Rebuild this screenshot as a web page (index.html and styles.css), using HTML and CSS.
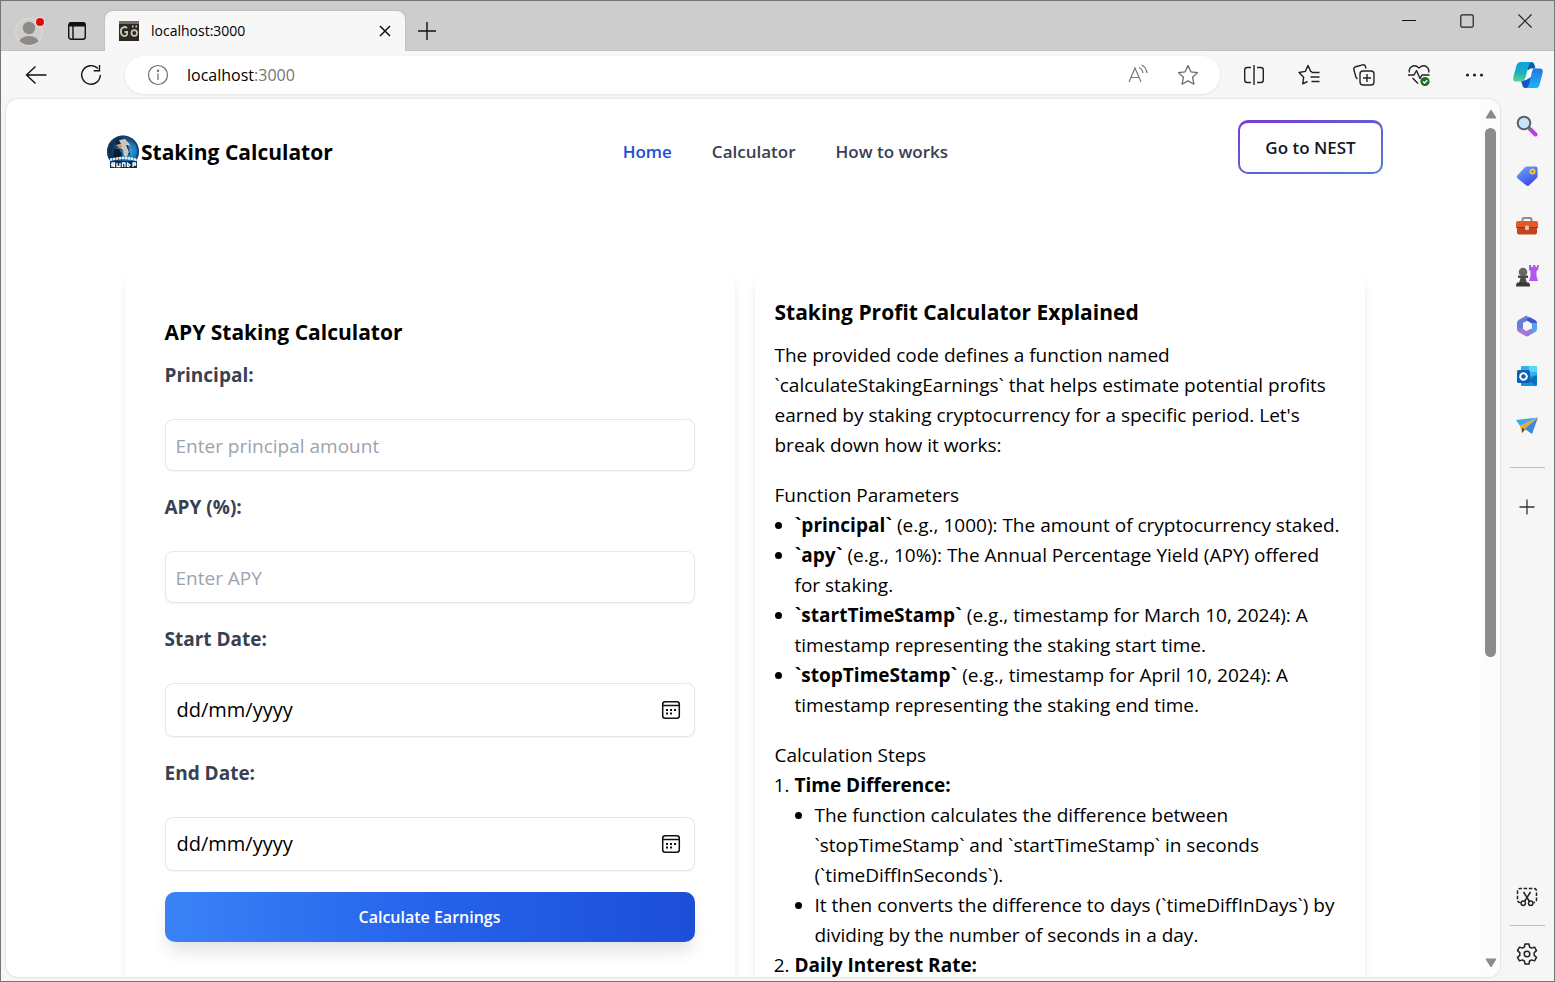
FILE: index.html
```html
<!DOCTYPE html>
<html lang="en">
<head>
<meta charset="utf-8">
<title>localhost:3000</title>
<link rel="stylesheet" href="styles.css">
</head>
<body>
<div class="window">
  <div class="tabbar">
    <button class="tb-btn profile" aria-label="Profile">
      <svg width="32" height="32" viewBox="0 0 32 32"><defs><clipPath id="pc"><circle cx="15" cy="17" r="13"/></clipPath></defs><circle cx="15" cy="17" r="13.5" fill="#d0cecb" stroke="#dfddda"/><g clip-path="url(#pc)" fill="#8d8a87"><circle cx="15" cy="13" r="6.2"/><ellipse cx="15" cy="29" rx="10.5" ry="8"/></g><circle cx="26" cy="7" r="5" fill="#f3e4e4"/><circle cx="26" cy="7" r="4" fill="#dc0a0a"/></svg>
    </button>
    <button class="tb-btn workspaces" aria-label="Tab actions">
      <svg width="20" height="20" viewBox="0 0 20 20" fill="none" stroke="#111" stroke-width="1.4"><rect x="1.7" y="1.7" width="16.6" height="16.6" rx="2.5"/><path d="M2 3.5h16" stroke-width="4"/><path d="M6 5v13"/></svg>
    </button>
    <div class="tab">
      <svg width="20" height="20" viewBox="0 0 20 20" fill="none"><rect width="20" height="20" fill="#2d2922"/><path d="M0 0h20v3H0z" fill="#767064"/><path d="M8 7.200C6.800 5.900 5 5.800 3.500 6.800S1.600 10 2 12s2.200 3.400 4 3c1.300-.200 2-.900 2.100-1.800V11H5.500" stroke="#c9c5bb" stroke-width="1.800"/><circle cx="15.300" cy="12" r="2.800" stroke="#c9c5bb" stroke-width="1.700"/><path d="M13 5.500h1.500M16.500 5.500H18" stroke="#c9c5bb" stroke-width="1.800"/></svg>
      <span class="tab-title">localhost:3000</span>
      <button class="tab-close" aria-label="Close tab"><svg width="12" height="12" viewBox="0 0 12 12" stroke="#111" stroke-width="1.500"><path d="M1 1l10 10M11 1L1 11"/></svg></button>
    </div>
    <button class="newtab" aria-label="New tab"><svg width="18" height="18" viewBox="0 0 18 18" stroke="#111" stroke-width="1.400"><path d="M9 0v18M0 9h18"/></svg></button>
    <div class="winctl">
      <button aria-label="Minimize"><svg width="14" height="14" viewBox="0 0 14 14" stroke="#111"><path d="M0 6.500h14"/></svg></button>
      <button aria-label="Maximize"><svg width="14" height="14" viewBox="0 0 14 14" fill="none" stroke="#222" stroke-width="1.200"><rect x=".8" y=".8" width="12.400" height="12.400" rx="1.500"/></svg></button>
      <button aria-label="Close"><svg width="14" height="14" viewBox="0 0 14 14" stroke="#222" stroke-width="1.200"><path d="M.5.5l13 13M13.500.5l-13 13"/></svg></button>
    </div>
  </div>

  <div class="toolbar">
    <button class="tool" aria-label="Back"><svg width="22" height="20" viewBox="0 0 22 20" fill="none" stroke="#111" stroke-width="1.400"><path d="M21.500 10H1.500M10.500 1.500L1.500 10l9 8.500"/></svg></button>
    <button class="tool" aria-label="Refresh"><svg width="22" height="22" viewBox="0 0 22 22" fill="none" stroke="#111" stroke-width="1.400"><path d="M20.300 11A9.300 9.300 0 1 1 17.800 4.600M19.500 1v5.800h-5.800"/></svg></button>
    <div class="address">
      <svg width="22" height="22" viewBox="0 0 22 22" fill="none" stroke="#6c6c6c" stroke-width="1.200"><circle cx="11" cy="11" r="9.500"/><path d="M11 9.500v6.500"/><circle cx="11" cy="6.800" r=".6" fill="#6c6c6c"/></svg>
      <span class="url">localhost<span class="port">:3000</span></span>
      <button class="addr-btn" aria-label="Read aloud"><svg width="22" height="22" viewBox="0 0 22 22" fill="none" stroke="#767676" stroke-width="1.200"><path d="M2 18L8 4l6 14M4 13.500h8M12 3.500c2 .8 3.500 2.600 4 5.500M14.500 1c3 1.200 5 4 5.500 8"/></svg></button>
      <button class="addr-btn" aria-label="Add to favorites"><svg width="22" height="22" viewBox="0 0 22 22" fill="none" stroke="#6c6c6c" stroke-width="1.300" stroke-linejoin="round"><path d="M11 1.500l2.900 6.300 6.600.8-4.900 4.700 1.300 6.900L11 16.900l-5.900 3.300 1.300-6.900L1.500 8.600l6.600-.8z"/></svg></button>
    </div>
    <button class="tool" aria-label="Split screen"><svg width="22" height="22" viewBox="0 0 22 22" fill="none" stroke="#222" stroke-width="1.400"><path d="M8 3.500H4.200A2.500 2.500 0 0 0 1.700 6v10a2.500 2.500 0 0 0 2.500 2.500H8M14 3.500h3.800A2.500 2.500 0 0 1 20.300 6v10a2.500 2.500 0 0 1-2.500 2.500H14M11 1v20"/></svg></button>
    <button class="tool" aria-label="Favorites"><svg width="22" height="22" viewBox="0 0 22 22" fill="none" stroke="#222" stroke-width="1.400" stroke-linejoin="round"><path d="M14 7.700L12.700 7.400 10 1.500 7.300 7.400 1 8.500l4.700 4.700-1 6.700 4.800-2.400M13.500 8.500H21.500M12.500 13H21.500M13.500 17.500H21.500"/></svg></button>
    <button class="tool" aria-label="Collections"><svg width="22" height="22" viewBox="0 0 22 22" fill="none" stroke="#222" stroke-width="1.400"><rect x="7" y="7" width="14" height="14" rx="3"/><path d="M14 10v8M10 14h8M4.500 15L3 13.500.9 5.800a2.500 2.500 0 0 1 1.800-3L9.500.9a2.500 2.500 0 0 1 3 1.800L13 4.500"/></svg></button>
    <button class="tool" aria-label="Browser essentials"><svg width="22" height="22" viewBox="0 0 22 22" fill="none" stroke="#222" stroke-width="1.400" stroke-linejoin="round"><path d="M1.500 8.500C0 4 5.500-1 11 4c5.500-5 11 0 9.500 4.500M0 11h6l2.500-4.500L12 14.500l2-3.500h7.500M4.500 14l5.500 5.500"/><circle cx="17" cy="17.500" r="4.600" fill="#18731f" stroke="none"/><path d="M15 17.500l1.500 1.500 2.800-2.800" stroke="#fff"/></svg></button>
    <button class="tool" aria-label="Settings and more"><svg width="20" height="6" viewBox="0 0 20 6" fill="#222"><circle cx="3.500" cy="3" r="1.600"/><circle cx="10.500" cy="3" r="1.600"/><circle cx="17.500" cy="3" r="1.600"/></svg></button>
    <button class="tool copilot" aria-label="Copilot"><svg width="30" height="28" viewBox="0 0 30 28"><defs><linearGradient id="c1" x1="0" y1="0" x2="0" y2="1"><stop stop-color="#0ea0e0"/><stop offset=".55" stop-color="#19b0c0"/><stop offset="1" stop-color="#5fd483"/></linearGradient><linearGradient id="c2" x1="0" y1="0" x2="0" y2="1"><stop stop-color="#2476dc"/><stop offset="1" stop-color="#1bb4fb"/></linearGradient></defs><path d="M13 1h5c2 0 3 1.300 3.500 3l1 3.500h-5l-3 2z" fill="#0b5da0"/><path d="M8 20l5-1 5-3 3 4-3 5.500c-.6 1-1.500 1.500-3 1.500h-3C10.500 27 10 26 9.500 24.500z" fill="#1652cf"/><path d="M8 1h10.500c-1.500.5-2.200 1.500-2.800 3.500l-3 11c-.6 3-2 5-4.200 5H3c-2.500 0-3.300-2-2.600-4.500l3-11.500C4.300 2.300 5.500 1 8 1z" fill="url(#c1)"/><path d="M21.500 7.500H27c2.500 0 3.300 2 2.600 4.500l-3 11.500C26 26 25 27 23 27H13c1.500-.5 2.400-1.700 3-3.700l3-12.500c.5-2 1-3.300 2.500-3.300z" fill="url(#c2)"/></svg></button>
  </div>

  <div class="body">
    <div class="viewport">
      <div class="page">
        <header class="site-header">
          <div class="brand">
            <svg width="34" height="34" viewBox="0 0 34 34"><defs><radialGradient id="lg" cx=".7" cy=".5" r=".65"><stop stop-color="#2ba4e8"/><stop offset=".6" stop-color="#11568f"/><stop offset="1" stop-color="#0b2746"/></radialGradient></defs><circle cx="17" cy="16.500" r="16" fill="url(#lg)"/><circle cx="17" cy="16.500" r="15" fill="none" stroke="#183d62" stroke-width="1.500"/><path d="M9 6l5-3 7 2 4 5-3 1 2 8-4 3-3-7-4-1-3-5z" fill="#172636"/><path d="M13 5l6-1 4 4 2 3-5-1 3 7-2 5-3-1-1-6-4-3-3-2 5-1z" fill="#c6c8c4"/><path d="M13 9l3 1-1 4-3-1z" fill="#d98d56"/><path d="M8 14l5 0 3 5-1 5H7z" fill="#101a2a"/><path d="M4 26h27v7H4z" fill="#062a55"/><path d="M4 25q13-4 27 0" stroke="#dff4ff" stroke-width="2.500" stroke-dasharray="2.500 .5" fill="none"/><path d="M6 32v-4h2.500v2H6l3 2M11 28v3.500h3V28M16.500 32v-4h2.500v4M21.500 32v-4l2.500 2-2 2M27 32v-4h2.500v2H27" stroke="#fff" stroke-width="1.300" fill="none"/></svg>
            <span>Staking Calculator</span>
          </div>
          <nav class="nav">
            <a href="#" class="active">Home</a>
            <a href="#">Calculator</a>
            <a href="#">How to works</a>
          </nav>
          <button class="nest">Go to NEST</button>
        </header>

        <main class="cards">
          <form class="card calc">
            <h2>APY Staking Calculator</h2>
            <label for="principal">Principal:</label>
            <input class="field" id="principal" type="text" placeholder="Enter principal amount">
            <label for="apy">APY (%):</label>
            <input class="field" id="apy" type="text" placeholder="Enter APY">
            <label for="start">Start Date:</label>
            <div class="field date">
              <input id="start" type="text" value="dd/mm/yyyy">
              <button type="button" aria-label="Pick start date"><svg width="20" height="20" viewBox="0 0 20 20" fill="none" stroke="#111" stroke-width="1.500"><rect x="1.700" y="1.700" width="16.600" height="16.600" rx="2.500"/><path d="M2 5.500h16"/><path d="M5 10h2M9 10h2M13 10h2M5 13.500h2M9 13.500h2" stroke-width="2"/></svg></button>
            </div>
            <label for="end">End Date:</label>
            <div class="field date">
              <input id="end" type="text" value="dd/mm/yyyy">
              <button type="button" aria-label="Pick end date"><svg width="20" height="20" viewBox="0 0 20 20" fill="none" stroke="#111" stroke-width="1.500"><rect x="1.700" y="1.700" width="16.600" height="16.600" rx="2.500"/><path d="M2 5.500h16"/><path d="M5 10h2M9 10h2M13 10h2M5 13.500h2M9 13.500h2" stroke-width="2"/></svg></button>
            </div>
            <button type="button" class="submit">Calculate Earnings</button>
          </form>

          <section class="card info">
            <h2>Staking Profit Calculator Explained</h2>
            <p>The provided code defines a function named `calculateStakingEarnings` that helps estimate potential profits earned by staking cryptocurrency for a specific period. Let's break down how it works:</p>
            <h3>Function Parameters</h3>
            <ul>
              <li><strong>`principal`</strong> (e.g., 1000): The amount of cryptocurrency staked.</li>
              <li><strong>`apy`</strong> (e.g., 10%): The Annual Percentage Yield (APY) offered for staking.</li>
              <li><strong>`startTimeStamp`</strong> (e.g., timestamp for March 10, 2024): A timestamp representing the staking start time.</li>
              <li><strong>`stopTimeStamp`</strong> (e.g., timestamp for April 10, 2024): A timestamp representing the staking end time.</li>
            </ul>
            <h3>Calculation Steps</h3>
            <ol>
              <li><strong>Time Difference:</strong>
                <ul>
                  <li>The function calculates the difference between `stopTimeStamp` and `startTimeStamp` in seconds (`timeDiffInSeconds`).</li>
                  <li>It then converts the difference to days (`timeDiffInDays`) by dividing by the number of seconds in a day.</li>
                </ul>
              </li>
              <li><strong>Daily Interest Rate:</strong></li>
            </ol>
          </section>
        </main>
      </div>
      <div class="scrollbar">
        <svg width="12" height="10" viewBox="0 0 12 10"><path d="M6 1l5 8H1z" fill="#8b8b8b" stroke="#8b8b8b" stroke-linejoin="round"/></svg>
        <div class="track"><div class="thumb"></div></div>
        <svg width="12" height="10" viewBox="0 0 12 10"><path d="M6 9l5-8H1z" fill="#8b8b8b" stroke="#8b8b8b" stroke-linejoin="round"/></svg>
      </div>
    </div>

    <aside class="sidebar">
      <button aria-label="Search"><svg width="22" height="22" viewBox="0 0 22 22"><path d="M14 14l5.500 5.500" stroke="#b83fe0" stroke-width="4" stroke-linecap="round"/><path d="M12.500 12.500l2 2" stroke="#777" stroke-width="2.500"/><circle cx="8" cy="8" r="6.300" fill="#c4e4f8" stroke="#5d6064" stroke-width="2"/></svg></button>
      <button aria-label="Shopping"><svg width="22" height="22" viewBox="0 0 22 22"><defs><linearGradient id="tg" x1="0" y1="0" x2=".6" y2="1"><stop stop-color="#6cb0fa"/><stop offset="1" stop-color="#3f46ee"/></linearGradient></defs><path d="M11 1.500h8.500c1.300 0 2 .7 2 2V11c0 1-.3 1.600-1 2.300l-7.300 7c-1 1-2 1-3 0l-8.700-7c-1-1-1-2 0-3L8.700 2.500c.7-.7 1.300-1 2.300-1z" fill="url(#tg)"/><circle cx="16.500" cy="6.500" r="2.300" fill="#9d936c" stroke="#f5cd3d" stroke-width="1.500"/></svg></button>
      <button aria-label="Tools"><svg width="24" height="20" viewBox="0 0 24 20"><path d="M7.500 6V3.500Q7.500 2 9 2h6q1.500 0 1.500 1.500V6" fill="none" stroke="#8c8c8c" stroke-width="2"/><path d="M2 8h20v8.500q0 2-2 2H4q-2 0-2-2z" fill="#c5431a"/><path d="M3 5h18q2 0 2 2v3q0 1.500-2 1.500H3q-2 0-2-1.500V7q0-2 2-2z" fill="#e25a22"/><path d="M1 11.500h22" stroke="#9e3414"/><rect x="10" y="9.500" width="4" height="4.500" rx="1.500" fill="#ccc"/></svg></button>
      <button aria-label="Games"><svg width="24" height="24" viewBox="0 0 24 24"><path d="M14 1h2.200v2h1.800V1h2.500v2h1.500V1H24l-1 5-1.500 1v5l1.500 5h-9l1.500-5V7L14 6z" fill="#b457ee"/><circle cx="8" cy="8" r="4.300" fill="#686868"/><path d="M3 11.500h10v2.500h-2.500l1.500 5h-8l1.500-5H3z" fill="#4c4c4c"/><path d="M3 18.500h10q2 0 2 4H1q0-4 2-4z" fill="#393939"/></svg></button>
      <button aria-label="Microsoft 365"><svg width="22" height="22" viewBox="0 0 22 22"><path d="M10.500.5L2.500 5Q1 6 1 8v6l6 2V8l7-4z" fill="#687ed8"/><path d="M10.500.5L19 5q2 1 2 3v5l-6-5-5-3 3-3z" fill="#3c57c9"/><path d="M21 8v6q0 2-1.700 3L12 21l-1-4 5-3.500V8z" fill="#57a2e8"/><path d="M1 14q0 2 1.500 3l7 4q1.500.8 3 0l4-4.500-2-3-4.500 2.500L6 13z" fill="#a575d7"/><path d="M11 7l4 2v4.500L11 15.500l-4-2V9z" fill="#f6f6f6"/></svg></button>
      <button aria-label="Outlook"><svg width="22" height="22" viewBox="0 0 22 22"><path d="M6 1h14q1 0 1 1v10H5V2q0-1 1-1z" fill="#35afe8"/><path d="M13 1h8v6h-8z" fill="#5dd5fb"/><path d="M5 13l16-3v10q0 1-1 1H6q-1 0-1-1z" fill="#1590dd"/><path d="M21 10l-9 5.500 8.500 5z" fill="#126bb5"/><rect x="1" y="5" width="13" height="13" rx="1.500" fill="#0863b8"/><circle cx="7.500" cy="11.500" r="3.300" fill="none" stroke="#fff" stroke-width="2"/></svg></button>
      <button aria-label="Drop"><svg width="24" height="20" viewBox="0 0 24 20"><path d="M1 4l22-2.500L5 10z" fill="#40a7ee"/><path d="M23 1.500L5 10l2 7 4-4z" fill="#e6aa31"/><path d="M23 1.500L17 18l-7-5z" fill="#3687e8"/><path d="M7 12l3 1-3 4z" fill="#5b4b2f"/></svg></button>
      <hr>
      <button class="small" aria-label="Customize"><svg width="16" height="16" viewBox="0 0 16 16" stroke="#333" stroke-width="1.300"><path d="M8 .5v15M.5 8h15"/></svg></button>
      <span class="grow"></span>
      <button class="small" aria-label="Screenshot"><svg width="22" height="20" viewBox="0 0 22 20" fill="none" stroke="#222" stroke-width="1.500"><path d="M4.500 15.500H4A2.500 2.500 0 0 1 1.500 13V4A2.500 2.500 0 0 1 4 1.500h14A2.500 2.500 0 0 1 20.500 4v9a2.500 2.500 0 0 1-2.500 2.500h-.5" stroke-dasharray="3.500 1.700"/><path d="M7.500 5l6 9.500M14.500 5l-6 9.500"/><circle cx="7.300" cy="16.300" r="2.200"/><circle cx="14.700" cy="16.300" r="2.200"/></svg></button>
      <hr>
      <button class="small" aria-label="Settings"><svg width="22" height="22" viewBox="0 0 22 22" fill="none" stroke="#222" stroke-width="1.500" stroke-linejoin="round"><path d="M9 1h4l.6 3 2 1.100 2.900-1 2 3.500-2.300 2v2.800l2.300 2-2 3.500-2.900-1-2 1.100-.6 3H9l-.6-3-2-1.100-2.900 1-2-3.500 2.300-2V9.600l-2.300-2 2-3.500 2.900 1 2-1.100z"/><circle cx="11" cy="11" r="2.800"/></svg></button>
    </aside>
  </div>
</div>
</body>
</html>
```
FILE: styles.css
```css
* { box-sizing: border-box; }

body {
  margin: 0;
  font-family: "Open Sans", "Noto Sans", sans-serif;
  font-size: 19px;
  line-height: 30px;
  color: #000;
}

button {
  font: inherit;
  color: inherit;
  background: none;
  border: 0;
  padding: 0;
  display: flex;
  align-items: center;
  justify-content: center;
}

svg { display: block; flex: none; }

.window {
  height: 100vh;
  display: flex;
  flex-direction: column;
  border: 1px solid #747679;
  background: #f6f6f6;
  overflow: hidden;
}

/* Tab strip */
.tabbar {
  flex: none;
  height: 50px;
  padding-left: 1px;
  display: flex;
  align-items: flex-end;
  background: #cdcdcd;
  box-shadow: inset 0 -1px #c2c2c2;
}

.tb-btn { height: 40px; }
.profile { width: 56px; }
.workspaces { width: 38px; }

.tab {
  width: 300px;
  height: 40px;
  margin-left: 9px;
  padding: 0 14px;
  display: flex;
  align-items: center;
  gap: 12px;
  background: #f7f7f7;
  border-radius: 8px 8px 0 0;
  box-shadow: 0 0 2px #a5a5a5;
  clip-path: inset(-3px -3px 0 -3px);
}

.tab-title { flex: 1; font-size: 14px; }
.newtab { width: 44px; height: 40px; }
.winctl { margin-left: auto; align-self: flex-start; display: flex; }
.winctl button { width: 58px; height: 40px; }

/* Address bar row */
.toolbar {
  flex: none;
  height: 47px;
  padding-left: 7px;
  display: flex;
  align-items: center;
  background: #f7f7f7;
}

.tool { width: 55px; height: 40px; }
.copilot { width: 53px; }

.address {
  flex: 1;
  height: 38px;
  margin: 0 6px 0 7px;
  padding: 0 16px 0 22px;
  display: flex;
  align-items: center;
  gap: 18px;
  background: #fff;
  border-radius: 19px;
  box-shadow: 0 1px 3px #e4e4e4;
}

.url { flex: 1; font-size: 16px; }
.port { color: #757575; }
.addr-btn { width: 32px; height: 32px; }

/* Web content and sidebar */
.body { flex: 1; min-height: 0; display: flex; }

.viewport {
  flex: 1;
  min-width: 0;
  margin: 1px 0 4px 5px;
  display: flex;
  background: #fff;
  border-radius: 12px;
  box-shadow: 0 0 2px #bdbdbd;
  overflow: hidden;
}

.page { flex: 1; min-width: 0; padding: 21px 98px 0 100px; }

.site-header {
  min-height: 64px;
  display: flex;
  align-items: center;
  justify-content: space-between;
}

.brand {
  display: flex;
  align-items: center;
  gap: 1px;
  font-size: 21px;
  font-weight: 700;
}

.nav { display: flex; gap: 40px; font-size: 17px; font-weight: 600; }
.nav a { color: #374151; text-decoration: none; }
.nav .active { color: #1d4ed8; }

.nest {
  width: 145px;
  height: 54px;
  align-self: flex-start;
  border: 2px solid transparent;
  border-top-width: 3px;
  border-radius: 10px;
  background: linear-gradient(#fff, #fff) padding-box, linear-gradient(to bottom right, #7c3acd, #4a80da) border-box;
  color: #111827;
  font-size: 17px;
  font-weight: 600;
}

.cards {
  max-width: 1240px;
  margin: 90px auto 0;
  display: grid;
  grid-template-columns: 1fr 1fr;
  gap: 20px;
}

.card {
  min-width: 0;
  border-radius: 10px;
  background: #fff;
  box-shadow: 0 4px 8px -1px rgba(0, 0, 0, 0.1);
}

.calc { padding: 40px; display: flex; flex-direction: column; }
.info { padding: 20px 20px 40px; }

h2 { margin: 0 0 10px; font-size: 21px; line-height: 36px; font-weight: 700; }
h3 { margin: 20px 0 0; font-size: inherit; font-weight: 400; }
p { margin: 0; }

label { font-weight: 700; color: #374151; }

.field {
  width: 100%;
  height: 52px;
  margin: 29px 0 21px;
  padding: 1px 10px 0;
  border: 1px solid #e5e7eb;
  border-radius: 8px;
  background: #fff;
  box-shadow: 0 1px 2px rgba(0, 0, 0, 0.05);
  font: inherit;
}

.field::placeholder { color: #9ca3af; opacity: 1; }

.date {
  height: 54px;
  padding: 0 13px 0 11px;
  display: flex;
  align-items: center;
}

.date input {
  flex: 1;
  min-width: 0;
  padding: 0;
  border: 0;
  background: none;
  font: inherit;
  font-size: 20px;
}

.submit {
  height: 50px;
  border-radius: 10px;
  background: linear-gradient(to right, #3b82f6, #2563eb 50%, #1d4ed8);
  box-shadow: 0 12px 18px -4px rgba(0, 0, 0, 0.13);
  color: #fff;
  font-size: 16px;
  font-weight: 600;
}

ul, ol { margin: 0; padding-left: 20px; }
ul { list-style: disc; }

/* Scrollbar */
.scrollbar {
  flex: none;
  width: 19px;
  padding: 10px 0 9px;
  display: flex;
  flex-direction: column;
  align-items: center;
  background: #fcfcfc;
}

.track { flex: 1; padding: 9px 0 3px; }
.thumb { width: 11px; height: 64%; border-radius: 6px; background: #8b8b8b; }

/* Sidebar */
.sidebar {
  flex: none;
  width: 54px;
  padding: 3px 0 7px;
  display: flex;
  flex-direction: column;
  align-items: center;
}

.sidebar button { width: 40px; height: 50px; }
.sidebar .small { height: 40px; }
.sidebar hr { width: 35px; margin: 16px 0 19px; border: 0; border-top: 1px solid #bdbdbd; }
.sidebar .grow { flex: 1; }
.sidebar .grow ~ hr { margin: 8px 0; }
```
